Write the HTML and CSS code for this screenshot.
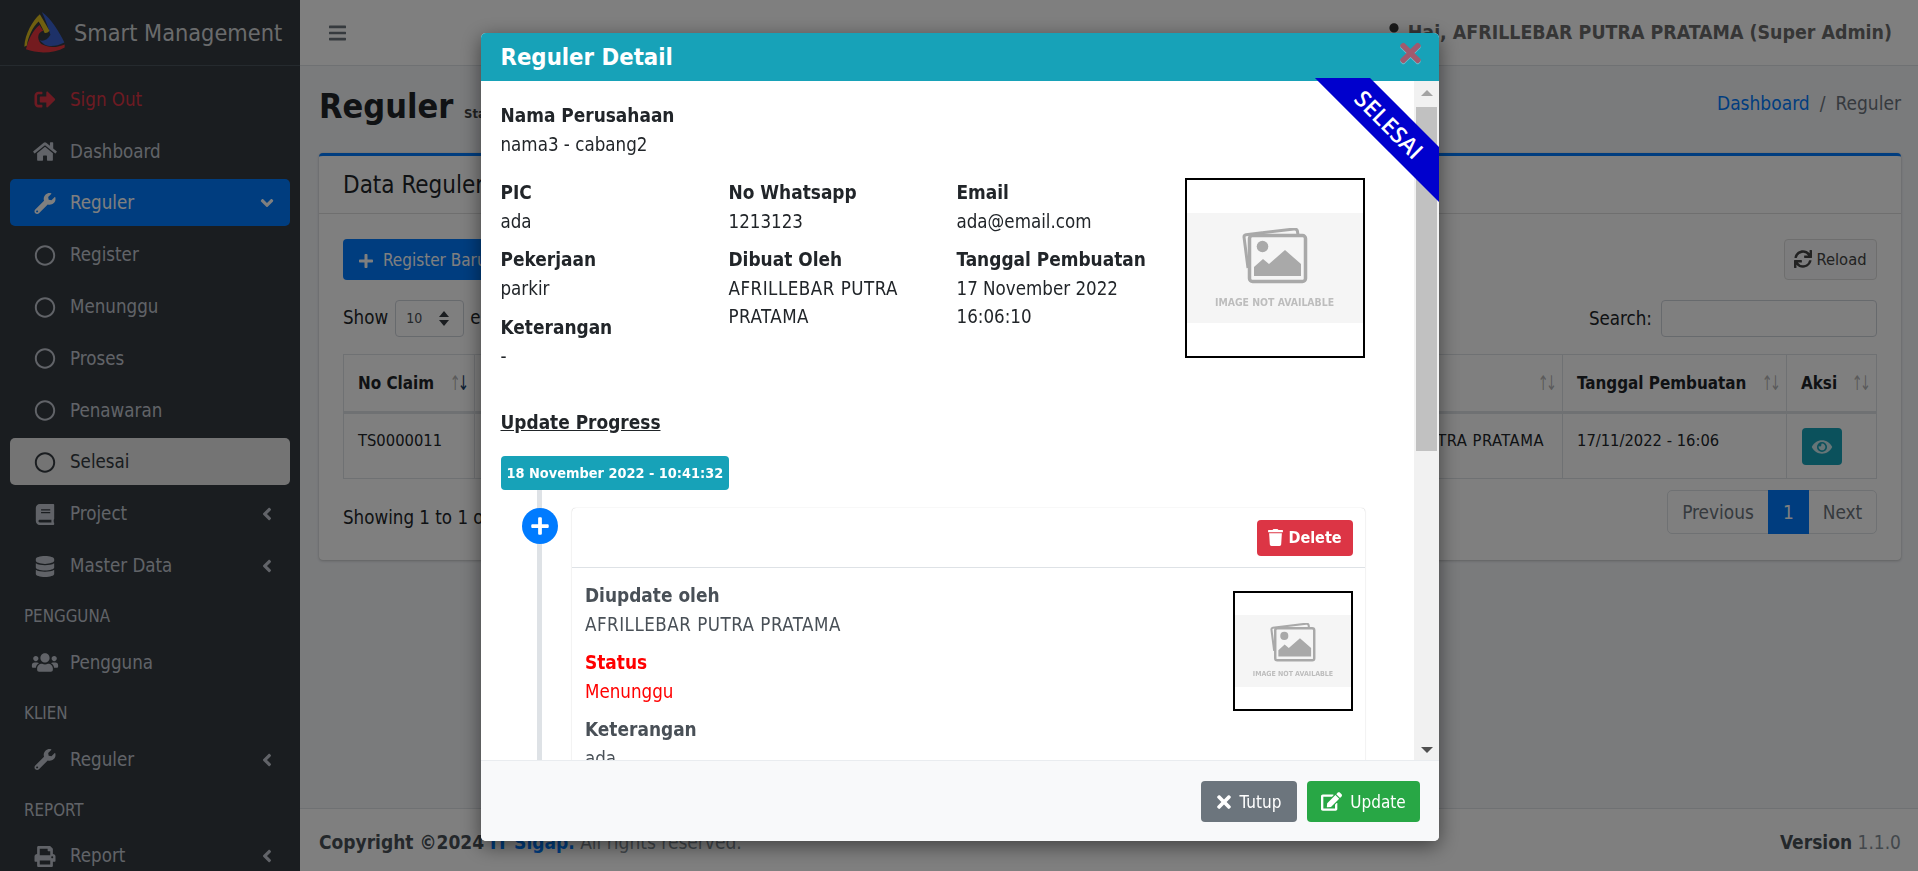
FILE: index.html
```html
<!DOCTYPE html>
<html lang="id">
<head>
    <meta charset="UTF-8">
    <meta name="viewport" content="width=device-width, initial-scale=1.0">
    <title>Reguler</title>
    <link rel="stylesheet" href="styles.css">
</head>
<body>

<svg class="sprite" xmlns="http://www.w3.org/2000/svg">
    <symbol id="i-plus" viewBox="0 0 448 512"><path d="M416 208H272V64c0-17.670-14.330-32-32-32h-32c-17.670 0-32 14.330-32 32v144H32c-17.670 0-32 14.330-32 32v32c0 17.670 14.330 32 32 32h144v144c0 17.670 14.330 32 32 32h32c17.670 0 32-14.330 32-32V304h144c17.670 0 32-14.330 32-32v-32c0-17.670-14.330-32-32-32z"/></symbol>
    <symbol id="i-times" viewBox="0 0 352 512"><path d="M242.720 256l100.070-100.070c12.280-12.280 12.280-32.190 0-44.480l-22.240-22.240c-12.280-12.280-32.190-12.280-44.480 0L176 189.280 75.930 89.210c-12.280-12.280-32.190-12.280-44.480 0L9.210 111.450c-12.280 12.280-12.280 32.190 0 44.480L109.280 256 9.210 356.070c-12.280 12.280-12.280 32.190 0 44.480l22.240 22.240c12.280 12.280 32.200 12.280 44.480 0L176 322.720l100.070 100.070c12.280 12.280 32.200 12.280 44.480 0l22.240-22.240c12.280-12.280 12.280-32.190 0-44.480L242.720 256z"/></symbol>
    <symbol id="i-trash" viewBox="0 0 448 512"><path d="M432 32H312l-9.400-18.700A24 24 0 0 0 281.100 0H166.800a23.720 23.720 0 0 0-21.400 13.300L136 32H16A16 16 0 0 0 0 48v32a16 16 0 0 0 16 16h416a16 16 0 0 0 16-16V48a16 16 0 0 0-16-16zM53.200 467a48 48 0 0 0 47.900 45h245.800a48 48 0 0 0 47.900-45L416 128H32z"/></symbol>
    <symbol id="i-home" viewBox="0 0 576 512"><path d="M280.370 148.260L96 300.110V464a16 16 0 0 0 16 16l112.060-.29a16 16 0 0 0 15.920-16V368a16 16 0 0 1 16-16h64a16 16 0 0 1 16 16v95.640a16 16 0 0 0 16 16.050L464 480a16 16 0 0 0 16-16V300L295.670 148.260a12.190 12.190 0 0 0-15.300 0zM571.600 251.470L488 182.560V44.050a12 12 0 0 0-12-12h-56a12 12 0 0 0-12 12v72.610L318.470 43a48 48 0 0 0-61 0L4.340 251.470a12 12 0 0 0-1.600 16.900l25.500 31A12 12 0 0 0 45.150 301l235.220-193.740a12.190 12.190 0 0 1 15.300 0L530.900 301a12 12 0 0 0 16.900-1.600l25.500-31a12 12 0 0 0-1.700-16.930z"/></symbol>
    <symbol id="i-wrench" viewBox="0 0 512 512"><path d="M507.730 109.100c-2.240-9.030-13.540-12.090-20.120-5.510l-74.360 74.360-67.880-11.310-11.310-67.880 74.360-74.360c6.620-6.620 3.430-17.900-5.660-20.160-47.380-11.740-99.550.91-136.580 37.930-39.640 39.640-50.550 97.100-34.050 147.200L18.740 402.760c-24.990 24.990-24.990 65.510 0 90.500 24.990 24.990 65.510 24.990 90.500 0l213.210-213.210c50.120 16.710 107.470 5.680 147.370-34.220 37.070-37.070 49.700-89.320 37.910-136.730zM64 472c-13.250 0-24-10.750-24-24 0-13.260 10.750-24 24-24s24 10.740 24 24c0 13.250-10.750 24-24 24z"/></symbol>
    <symbol id="i-circle" viewBox="0 0 512 512"><path d="M256 8C119 8 8 119 8 256s111 248 248 248 248-111 248-248S393 8 256 8zm0 448c-110.500 0-200-89.500-200-200S145.500 56 256 56s200 89.500 200 200-89.500 200-200 200z"/></symbol>
    <symbol id="i-signout" viewBox="0 0 512 512"><path d="M497 273L329 441c-15 15-41 4.500-41-17v-96H152c-13.300 0-24-10.700-24-24v-96c0-13.300 10.700-24 24-24h136V88c0-21.400 25.900-32 41-17l168 168c9.300 9.400 9.300 24.600 0 34zM192 436v-40c0-6.600-5.400-12-12-12H96c-17.700 0-32-14.300-32-32V160c0-17.700 14.300-32 32-32h84c6.600 0 12-5.400 12-12V76c0-6.600-5.400-12-12-12H96c-53 0-96 43-96 96v192c0 53 43 96 96 96h84c6.600 0 12-5.400 12-12z"/></symbol>
    <symbol id="i-book" viewBox="0 0 448 512"><path d="M448 360V24c0-13.300-10.700-24-24-24H96C43 0 0 43 0 96v320c0 53 43 96 96 96h328c13.300 0 24-10.700 24-24v-16c0-7.500-3.500-14.300-8.900-18.700-4.200-15.400-4.200-59.300 0-74.700 5.400-4.300 8.900-11.100 8.900-18.600zM128 134c0-3.300 2.700-6 6-6h212c3.300 0 6 2.700 6 6v20c0 3.300-2.700 6-6 6H134c-3.300 0-6-2.700-6-6v-20zm0 64c0-3.300 2.700-6 6-6h212c3.300 0 6 2.700 6 6v20c0 3.300-2.700 6-6 6H134c-3.300 0-6-2.700-6-6v-20zm253.400 250H96c-17.700 0-32-14.300-32-32 0-17.600 14.400-32 32-32h285.400c-1.900 17.100-1.900 46.900 0 64z"/></symbol>
    <symbol id="i-database" viewBox="0 0 448 512"><path d="M448 73.143v45.714C448 159.143 347.667 192 224 192S0 159.143 0 118.857V73.143C0 32.857 100.333 0 224 0s224 32.857 224 73.143zM448 176v102.857C448 319.143 347.667 352 224 352S0 319.143 0 278.857V176c48.125 33.143 136.208 48.572 224 48.572S399.874 209.143 448 176zm0 160v102.857C448 479.143 347.667 512 224 512S0 479.143 0 438.857V336c48.125 33.143 136.208 48.572 224 48.572S399.874 369.143 448 336z"/></symbol>
    <symbol id="i-users" viewBox="0 0 640 512"><path d="M96 224c35.300 0 64-28.700 64-64s-28.700-64-64-64-64 28.700-64 64 28.700 64 64 64zm448 0c35.300 0 64-28.700 64-64s-28.700-64-64-64-64 28.700-64 64 28.700 64 64 64zm32 32h-64c-17.600 0-33.500 7.100-45.100 18.600 40.300 22.100 68.900 62 75.100 109.400h66c17.700 0 32-14.300 32-32v-32c0-35.300-28.700-64-64-64zm-256 0c61.900 0 112-50.100 112-112S381.900 32 320 32 208 82.100 208 144s50.100 112 112 112zm76.800 32h-8.300c-20.800 10-43.900 16-68.500 16s-47.600-6-68.500-16h-8.300C179.600 288 128 339.600 128 403.200V432c0 26.500 21.500 48 48 48h288c26.500 0 48-21.500 48-48v-28.800c0-63.600-51.600-115.200-115.200-115.200zm-223.700-13.400C161.500 263.100 145.600 256 128 256H64c-35.300 0-64 28.700-64 64v32c0 17.700 14.300 32 32 32h65.900c6.300-47.400 34.900-87.300 75.200-109.400z"/></symbol>
    <symbol id="i-print" viewBox="0 0 512 512"><path d="M448 192V77.250c0-8.490-3.370-16.620-9.370-22.630L393.370 9.370c-6-6-14.140-9.370-22.630-9.370H96C78.330 0 64 14.330 64 32v160c-35.350 0-64 28.650-64 64v112c0 8.840 7.160 16 16 16h48v96c0 17.670 14.330 32 32 32h320c17.670 0 32-14.330 32-32v-96h48c8.840 0 16-7.160 16-16V256c0-35.350-28.650-64-64-64zm-64 256H128v-96h256v96zm0-224H128V64h192v48c0 8.840 7.160 16 16 16h48v96zm48 72c-13.250 0-24-10.750-24-24 0-13.270 10.750-24 24-24s24 10.730 24 24c0 13.250-10.750 24-24 24z"/></symbol>
    <symbol id="i-eye" viewBox="0 0 576 512"><path d="M572.520 241.400C518.290 135.590 410.930 64 288 64S57.680 135.640 3.480 241.410a32.350 32.350 0 0 0 0 29.190C57.710 376.410 165.070 448 288 448s230.320-71.640 284.520-177.410a32.350 32.350 0 0 0 0-29.190zM288 400a144 144 0 1 1 144-144 143.930 143.930 0 0 1-144 144zm0-240a95.310 95.310 0 0 0-25.310 3.790 47.850 47.850 0 0 1-66.900 66.900A95.780 95.780 0 1 0 288 160z"/></symbol>
    <symbol id="i-sync" viewBox="0 0 512 512"><path d="M440.650 12.570l4 82.770A247.160 247.160 0 0 0 255.830 8C134.730 8 33.910 94.920 12.290 209.820A12 12 0 0 0 24.090 224h49.050a12 12 0 0 0 11.670-9.260 175.910 175.910 0 0 1 317-56.940l-101.460-4.860a12 12 0 0 0-12.570 12v47.410a12 12 0 0 0 12 12H500a12 12 0 0 0 12-12V12a12 12 0 0 0-12-12h-47.370a12 12 0 0 0-11.980 12.570zM255.830 432a175.610 175.610 0 0 1-146-77.800l101.800 4.870a12 12 0 0 0 12.570-12v-47.400a12 12 0 0 0-12-12H12a12 12 0 0 0-12 12V500a12 12 0 0 0 12 12h47.350a12 12 0 0 0 12-12.600l-4.150-82.570A247.170 247.170 0 0 0 255.830 504c121.110 0 221.930-86.920 243.550-201.820a12 12 0 0 0-11.800-14.180h-49.050a12 12 0 0 0-11.670 9.260A175.860 175.860 0 0 1 255.830 432z"/></symbol>
    <symbol id="i-edit" viewBox="0 0 576 512"><path d="M402.600 83.200l90.200 90.200c3.800 3.800 3.800 10 0 13.800L274.400 405.600l-92.800 10.300c-12.400 1.400-22.900-9.100-21.500-21.500l10.300-92.800L388.800 83.200c3.800-3.800 10-3.800 13.800 0zm162-22.900l-48.800-48.800c-15.200-15.200-39.900-15.200-55.200 0l-35.400 35.400c-3.800 3.800-3.800 10 0 13.800l90.200 90.200c3.800 3.800 10 3.800 13.800 0l35.400-35.400c15.200-15.300 15.200-40 0-55.200zM384 346.200V448H64V128h229.800c3.200 0 6.200-1.300 8.500-3.500l40-40c7.600-7.600 2.200-20.500-8.500-20.500H48C21.500 64 0 85.500 0 112v352c0 26.500 21.500 48 48 48h352c26.500 0 48-21.500 48-48V306.200c0-10.700-12.900-16-20.500-8.500l-40 40c-2.200 2.300-3.500 5.300-3.500 8.500z"/></symbol>
    <symbol id="i-user" viewBox="0 0 448 512"><path d="M224 256c70.700 0 128-57.300 128-128S294.700 0 224 0 96 57.300 96 128s57.300 128 128 128zm89.600 32h-16.700c-22.200 10.200-46.900 16-72.900 16s-50.600-5.800-72.900-16h-16.700C60.200 288 0 348.200 0 422.400V464c0 26.500 21.500 48 48 48h352c26.500 0 48-21.500 48-48v-41.600c0-74.200-60.200-134.400-134.400-134.400z"/></symbol>
    <symbol id="i-bars" viewBox="0 0 448 512"><path d="M16 132h416c8.837 0 16-7.163 16-16V76c0-8.837-7.163-16-16-16H16C7.163 60 0 67.163 0 76v40c0 8.837 7.163 16 16 16zm0 160h416c8.837 0 16-7.163 16-16v-40c0-8.837-7.163-16-16-16H16c-8.837 0-16 7.163-16 16v40c0 8.837 7.163 16 16 16zm0 160h416c8.837 0 16-7.163 16-16v-40c0-8.837-7.163-16-16-16H16c-8.837 0-16 7.163-16 16v40c0 8.837 7.163 16 16 16z"/></symbol>
    <symbol id="i-angle" viewBox="0 0 256 512"><path d="M31.700 239l136-136c9.400-9.400 24.600-9.400 33.900 0l22.600 22.600c9.400 9.400 9.400 24.600 0 33.900L127.900 256l96.400 96.400c9.400 9.400 9.400 24.600 0 33.900L201.700 409c-9.400 9.400-24.600 9.400-33.900 0l-136-136c-9.500-9.400-9.500-24.600-.1-34z"/></symbol>
    <symbol id="i-noimg" viewBox="0 0 66 56">
        <path fill="none" stroke="currentColor" stroke-width="3" d="M6 40 2 9c0-1 .5-2 2-2.300L52 1c2-.2 3 .5 3.400 2L56 7"/>
        <rect x="7.500" y="7.500" width="56" height="46" rx="3" fill="#f5f5f5" stroke="currentColor" stroke-width="3.500"/>
        <circle cx="20.500" cy="18.500" r="5.800" fill="currentColor"/>
        <path fill="currentColor" d="M12 48V39l9-8 6 5 16-14 16 14v12z"/>
    </symbol>
</svg>

<div class="wrapper">
    <aside class="sidebar">
        <div class="brand">
            <svg class="brand-logo" viewBox="25 12 130 130">
                <path fill="#3a62d0" d="M82 15C110 35 135 75 150 107 127 119 105 121 90 113L74 100C85 105 100 100 108 84 100 58 92 35 82 15Z"/>
                <path fill="#e8363e" d="M34 128C42 95 55 70 75 54L86 72C70 76 65 96 80 112 105 125 130 122 151 113L151 122C120 140 70 142 34 128Z"/>
                <path fill="#e0c020" d="M29 120C31 80 55 40 76 22L105 72C100 78 95 80 90 78 85 66 78 52 72 44 55 60 40 90 37 116Z"/>
            </svg>
            <span class="brand-text">Smart Management</span>
        </div>
        <nav class="side-nav">
            <a class="nav-item nav-danger"><svg class="nav-ico"><use href="#i-signout"/></svg>Sign Out</a>
            <a class="nav-item"><svg class="nav-ico"><use href="#i-home"/></svg>Dashboard</a>
            <a class="nav-item nav-primary"><svg class="nav-ico"><use href="#i-wrench"/></svg>Reguler<svg class="nav-caret caret-down"><use href="#i-angle"/></svg></a>
            <a class="nav-item"><svg class="nav-ico"><use href="#i-circle"/></svg>Register</a>
            <a class="nav-item"><svg class="nav-ico"><use href="#i-circle"/></svg>Menunggu</a>
            <a class="nav-item"><svg class="nav-ico"><use href="#i-circle"/></svg>Proses</a>
            <a class="nav-item"><svg class="nav-ico"><use href="#i-circle"/></svg>Penawaran</a>
            <a class="nav-item nav-light"><svg class="nav-ico"><use href="#i-circle"/></svg>Selesai</a>
            <a class="nav-item"><svg class="nav-ico"><use href="#i-book"/></svg>Project<svg class="nav-caret"><use href="#i-angle"/></svg></a>
            <a class="nav-item"><svg class="nav-ico"><use href="#i-database"/></svg>Master Data<svg class="nav-caret"><use href="#i-angle"/></svg></a>
            <div class="nav-header">PENGGUNA</div>
            <a class="nav-item"><svg class="nav-ico"><use href="#i-users"/></svg>Pengguna</a>
            <div class="nav-header">KLIEN</div>
            <a class="nav-item"><svg class="nav-ico"><use href="#i-wrench"/></svg>Reguler<svg class="nav-caret"><use href="#i-angle"/></svg></a>
            <div class="nav-header">REPORT</div>
            <a class="nav-item"><svg class="nav-ico"><use href="#i-print"/></svg>Report<svg class="nav-caret"><use href="#i-angle"/></svg></a>
        </nav>
    </aside>

    <div class="main">
        <header class="topbar">
            <svg class="burger"><use href="#i-bars"/></svg>
            <div class="greeting"><svg class="greeting-ico"><use href="#i-user"/></svg>Hai, AFRILLEBAR PUTRA PRATAMA (Super Admin)</div>
        </header>

        <div class="content">
            <div class="page-head">
                <h1 class="page-title">Reguler <small>Status</small></h1>
                <div class="crumbs"><a>Dashboard</a><span class="crumb-sep">/</span><span>Reguler</span></div>
            </div>

            <section class="card">
                <div class="card-head">Data Reguler</div>
                <div class="card-body">
                    <div class="tools">
                        <button class="btn-add"><svg class="btn-ico"><use href="#i-plus"/></svg>Register Baru</button>
                        <button class="btn-reload"><svg class="btn-ico"><use href="#i-sync"/></svg>Reload</button>
                    </div>
                    <div class="filters">
                        <div class="length">Show <span class="select">10<i class="select-arrows"></i></span> entries</div>
                        <div class="search">Search: <span class="search-input"></span></div>
                    </div>
                    <table class="data-table">
                        <colgroup>
                            <col class="col-claim"><col class="col-auto"><col class="col-auto"><col class="col-by"><col class="col-date"><col class="col-act">
                        </colgroup>
                        <thead>
                            <tr>
                                <th>No Claim<span class="sort"><b>↑</b><b class="on">↓</b></span></th>
                                <th>Perusahaan<span class="sort"><b>↑</b><b>↓</b></span></th>
                                <th>PIC<span class="sort"><b>↑</b><b>↓</b></span></th>
                                <th>Dibuat Oleh<span class="sort"><b>↑</b><b>↓</b></span></th>
                                <th>Tanggal Pembuatan<span class="sort"><b>↑</b><b>↓</b></span></th>
                                <th>Aksi<span class="sort"><b>↑</b><b>↓</b></span></th>
                            </tr>
                        </thead>
                        <tbody>
                            <tr>
                                <td>TS0000011</td>
                                <td>nama3 - cabang2</td>
                                <td>ada</td>
                                <td class="caps">AFRILLEBAR PUTRA PRATAMA</td>
                                <td>17/11/2022 - 16:06</td>
                                <td><button class="btn-view"><svg><use href="#i-eye"/></svg></button></td>
                            </tr>
                        </tbody>
                    </table>
                    <div class="table-foot">
                        <div class="table-info">Showing 1 to 1 of 1 entries</div>
                        <div class="pager"><a>Previous</a><a class="pager-on">1</a><a>Next</a></div>
                    </div>
                </div>
            </section>
        </div>

        <footer class="page-foot">
            <div><b>Copyright ©2024 <a>IT Sigap.</a></b> All rights reserved.</div>
            <div><b>Version</b> 1.1.0</div>
        </footer>
    </div>
</div>

<div class="backdrop">
    <div class="modal">
        <div class="modal-head">
            <h2>Reguler Detail</h2>
            <svg class="modal-close"><use href="#i-times"/></svg>
        </div>
        <div class="modal-mid">
            <div class="modal-body">
                <dl class="field company">
                    <dt>Nama Perusahaan</dt>
                    <dd>nama3 - cabang2</dd>
                </dl>
                <div class="detail-row">
                    <div class="detail-col">
                        <dl class="field"><dt>PIC</dt><dd>ada</dd></dl>
                        <dl class="field"><dt>Pekerjaan</dt><dd>parkir</dd></dl>
                        <dl class="field"><dt>Keterangan</dt><dd>-</dd></dl>
                    </div>
                    <div class="detail-col">
                        <dl class="field"><dt>No Whatsapp</dt><dd>1213123</dd></dl>
                        <dl class="field"><dt>Dibuat Oleh</dt><dd class="caps">AFRILLEBAR PUTRA PRATAMA</dd></dl>
                    </div>
                    <div class="detail-col">
                        <dl class="field"><dt>Email</dt><dd>ada@email.com</dd></dl>
                        <dl class="field"><dt>Tanggal Pembuatan</dt><dd>17 November 2022 16:06:10</dd></dl>
                    </div>
                    <div class="noimg noimg-lg">
                        <div class="noimg-band">
                            <svg><use href="#i-noimg"/></svg>
                            <span>IMAGE NOT AVAILABLE</span>
                        </div>
                    </div>
                </div>

                <div class="progress-title">Update Progress</div>
                <div class="time-label">18 November 2022 - 10:41:32</div>
                <div class="timeline">
                    <span class="time-dot"><svg><use href="#i-plus"/></svg></span>
                    <div class="time-card">
                        <div class="time-card-head">
                            <button class="btn-delete"><svg class="btn-ico"><use href="#i-trash"/></svg>Delete</button>
                        </div>
                        <div class="time-card-body">
                            <div class="time-fields">
                                <dl class="field"><dt>Diupdate oleh</dt><dd class="caps">AFRILLEBAR PUTRA PRATAMA</dd></dl>
                                <dl class="field field-red"><dt>Status</dt><dd>Menunggu</dd></dl>
                                <dl class="field"><dt>Keterangan</dt><dd>ada</dd></dl>
                            </div>
                            <div class="noimg noimg-sm">
                                <div class="noimg-band">
                                    <svg><use href="#i-noimg"/></svg>
                                    <span>IMAGE NOT AVAILABLE</span>
                                </div>
                            </div>
                        </div>
                    </div>
                </div>
            </div>
            <div class="scrollbar">
                <i class="scroll-up"></i>
                <i class="scroll-thumb"></i>
                <i class="scroll-down"></i>
            </div>
        </div>
        <div class="modal-foot">
            <button class="btn-close"><svg class="btn-ico"><use href="#i-times"/></svg>Tutup</button>
            <button class="btn-update"><svg class="btn-ico"><use href="#i-edit"/></svg>Update</button>
        </div>
        <div class="ribbon"><span>SELESAI</span></div>
    </div>
</div>

</body>
</html>
```

FILE: styles.css
```css
* { box-sizing: border-box; }
html, body {
    height: 100%;
    margin: 0;
    overflow: hidden;
}
body {
    font-family: "DejaVu Sans", Tahoma, sans-serif;
    font-stretch: condensed;
    font-size: 18.6px;
    line-height: 28px;
    color: #212529;
    background: #f4f6f9;
}
.sprite { display: none; }
svg { fill: currentColor; }
button { font: inherit; border: none; }
dl, dt, dd, h1, h2 { margin: 0; }
.caps { letter-spacing: .5px; }

.wrapper { display: flex; height: 871px; }

/* sidebar */
.sidebar {
    width: 300px;
    flex: none;
    background: #343a40;
    color: #c2c7d0;
    overflow: hidden;
}
.brand {
    display: flex;
    align-items: center;
    height: 66px;
    padding-left: 23px;
    border-bottom: 1px solid #4b545c;
}
.brand-logo { width: 43px; height: 43px; margin-right: 8px; flex: none; }
.brand-text { font-size: 23.3px; color: #d5d7d9; }
.side-nav { padding-top: 9px; }
.nav-item {
    display: flex;
    align-items: center;
    height: 47.8px;
    margin: 0 10px 4px;
    padding: 2px 0 0 20px;
    border-radius: 5px;
}
.nav-ico { width: 30px; height: 21px; margin-right: 10px; flex: none; }
.nav-caret { width: 16px; height: 20px; margin-left: auto; margin-right: 15px; }
.caret-down { transform: rotate(-90deg); }
.nav-danger { color: #dc3545; }
.nav-primary { background: #007bff; color: #fff; }
.nav-light { background: #e8e8e8; color: #343a40; }
.nav-header {
    display: flex;
    align-items: center;
    height: 45px;
    padding: 2px 0 0 24px;
    font-size: 16.8px;
}

/* main column */
.main { flex: 1; display: flex; flex-direction: column; min-width: 0; }
.topbar {
    display: flex;
    align-items: center;
    justify-content: space-between;
    height: 66px;
    padding: 0 26px 0 29px;
    background: #fff;
    border-bottom: 1px solid #dee2e6;
    color: #6c757d;
}
.burger { width: 17px; height: 20px; }
.greeting { font-weight: bold; font-size: 19.4px; color: #6c6c6c; display: flex; align-items: center; }
.greeting-ico { width: 16px; height: 19px; margin-right: 6px; color: #333; }
.content { flex: 1; padding: 0 17px 0 19px; }
.page-head {
    display: flex;
    justify-content: space-between;
    align-items: center;
    height: 87px;
}
.page-title { font-size: 34px; line-height: 40px; }
.page-title small { font-size: 13px; color: #444; }
.crumbs { color: #6c757d; font-size: 19px; padding-bottom: 14px; }
.crumbs a { color: #007bff; }
.crumb-sep { margin: 0 10px; }

.card {
    background: #fff;
    border-top: 3px solid #007bff;
    border-radius: 4px;
    box-shadow: 0 0 1px rgba(0,0,0,.13), 0 1px 3px rgba(0,0,0,.2);
}
.card-head {
    height: 58px;
    padding: 0 24px;
    display: flex;
    align-items: center;
    font-size: 24px;
    border-bottom: 1px solid #dfdfdf;
}
.card-body { padding: 25px 24px 0; height: 346px; }
.tools { display: flex; justify-content: space-between; }
.btn-ico { height: 16px; width: 18px; margin-right: 8px; vertical-align: -3px; }
.btn-add {
    height: 41px;
    width: 180px;
    border-radius: 4px;
    background: #007bff;
    color: #fff;
    font-size: 17px;
    text-align: left;
    padding-left: 14px;
    white-space: nowrap;
}
.btn-reload {
    height: 41px;
    width: 93px;
    border-radius: 4px;
    background: #f8f9fa;
    border: 1px solid #ddd;
    color: #444;
    font-size: 16.4px;
    padding: 0;
}
.btn-reload .btn-ico { margin-right: 4px; height: 18px; width: 18px; }
.filters {
    display: flex;
    justify-content: space-between;
    align-items: center;
    margin-top: 19px;
    height: 37px;
}
.length, .search { display: flex; align-items: center; padding-top: 1px; }
.search { padding-top: 2px; }
.select {
    display: inline-flex;
    align-items: center;
    justify-content: space-between;
    width: 69px;
    height: 37px;
    margin: 0 6px 0 7px;
    padding: 0 14px 0 10px;
    border: 1px solid #ced4da;
    border-radius: 4px;
    background: #fff;
    font-size: 14px;
    color: #495057;
}
.select-arrows {
    width: 0;
    height: 15px;
    border-left: 5px solid transparent;
    border-right: 5px solid transparent;
    background: none;
    position: relative;
}
.select-arrows::before, .select-arrows::after {
    content: "";
    position: absolute;
    left: -5px;
    border-left: 5px solid transparent;
    border-right: 5px solid transparent;
}
.select-arrows::before { top: 0; border-bottom: 6px solid #343a40; }
.select-arrows::after { bottom: 0; border-top: 6px solid #343a40; }
.search-input {
    display: block;
    width: 216px;
    height: 37px;
    margin-left: 9px;
    border: 1px solid #ced4da;
    border-radius: 4px;
    background: #fff;
}

.data-table {
    width: 1534px;
    margin-top: 18px;
    table-layout: fixed;
    border-collapse: collapse;
    font-size: 16.4px;
}
.col-claim { width: 131px; }
.col-by { width: 260px; }
.col-date { width: 224px; }
.col-act { width: 90px; }
.data-table th, .data-table td {
    border: 1px solid #dee2e6;
    padding: 0 14px;
    text-align: left;
    white-space: nowrap;
    overflow: hidden;
}
.data-table th {
    position: relative;
    height: 58px;
    border-bottom-width: 3px;
    font-size: 16.9px;
}
.data-table td { height: 66px; vertical-align: top; padding-top: 13px; }
.sort {
    position: absolute;
    right: 8px;
    top: 14px;
    font-size: 15px;
    letter-spacing: -3px;
    color: rgba(0,0,0,.3);
    transform: scaleY(1.35);
}
.sort b { font-weight: normal; }
.sort .on { color: #1a3d66; }
.btn-view {
    display: block;
    width: 40px;
    height: 37px;
    margin: 1px 0 0 1px;
    border-radius: 4px;
    background: #17a2b8;
    color: #cdeaee;
}
.btn-view svg { width: 22px; height: 18px; vertical-align: middle; }
.table-foot {
    display: flex;
    justify-content: space-between;
    align-items: flex-start;
    margin-top: 11px;
}
.table-info { padding-top: 14px; }
.pager {
    display: flex;
    height: 44px;
    border: 1px solid #dee2e6;
    border-radius: 5px;
    color: #6c757d;
    font-size: 18.9px;
}
.pager a {
    display: flex;
    align-items: center;
    justify-content: center;
    width: 67px;
}
.pager a:first-child { width: 100px; }
.pager .pager-on { background: #007bff; color: #fff; width: 41px; margin: -1px 0; }
.page-foot {
    display: flex;
    justify-content: space-between;
    align-items: center;
    height: 63px;
    padding: 4px 17px 0 19px;
    background: #fff;
    border-top: 1px solid #dee2e6;
    color: #869099;
    font-size: 19px;
}
.page-foot b { color: #495057; }
.page-foot a { color: #007bff; }

/* modal */
.backdrop {
    position: fixed;
    inset: 0;
    padding: 33px 0 0 481px;
    background: rgba(0,0,0,.5);
}
.modal {
    position: relative;
    display: flex;
    flex-direction: column;
    width: 958px;
    height: 808px;
    background: #fff;
    border-radius: 5px;
    overflow: hidden;
    box-shadow: 0 5px 20px rgba(0,0,0,.5);
}
.modal-head {
    display: flex;
    align-items: center;
    justify-content: space-between;
    height: 48px;
    padding: 0 18px 0 19.5px;
    background: #17a2b8;
    flex: none;
}
.modal-head h2 { font-size: 23.7px; color: #fff; line-height: 30px; }
.modal-close {
    width: 21px;
    height: 30px;
    margin-bottom: 8px;
    color: #a05a6e;
    filter: drop-shadow(0 1px 0 rgba(255,255,255,.35));
}
.modal-mid { display: flex; flex: 1; min-height: 0; }
.modal-body {
    flex: 1;
    min-width: 0;
    padding: 20px 49px 0 19.5px;
    overflow: hidden;
}
.field { margin-bottom: 9.3px; }
.field dt { font-weight: bold; font-size: 18.9px; }
.field dd { padding-top: 2px; }
.company { margin-bottom: 19px; }
.detail-row { display: flex; }
.detail-col { width: 228px; padding-right: 20px; }
.noimg {
    display: flex;
    align-items: center;
    border: 2px solid #000;
    background: #fff;
    flex: none;
}
.noimg-band {
    width: 100%;
    display: flex;
    flex-direction: column;
    align-items: center;
    justify-content: center;
    background: #f5f5f5;
    color: #a9a9a9;
}
.noimg-band span { display: block; color: #bdbdbd; font-weight: bold; line-height: 1; white-space: nowrap; }
.noimg-lg { width: 180px; height: 180px; }
.noimg-lg .noimg-band { height: 110px; }
.noimg-lg svg { width: 66px; height: 56px; margin-bottom: 13px; }
.noimg-lg span { font-size: 10.4px; }
.noimg-sm { width: 120px; height: 120px; }
.noimg-sm .noimg-band { height: 72px; }
.noimg-sm svg { width: 46px; height: 39px; margin-bottom: 9px; }
.noimg-sm span { font-size: 7px; }
.progress-title {
    margin-top: 28px;
    font-weight: bold;
    text-decoration: underline;
    font-size: 18.9px;
}
.time-label {
    display: inline-block;
    margin-top: 20px;
    height: 34px;
    padding: 0 6px;
    line-height: 34px;
    border-radius: 4px;
    background: #17a2b8;
    color: #fff;
    font-weight: bold;
    font-size: 14.4px;
    vertical-align: top;
}
.timeline {
    position: relative;
    padding: 18px 0 0 71.5px;
}
.timeline::before {
    content: "";
    position: absolute;
    left: 36.5px;
    top: 0;
    bottom: 0;
    width: 5px;
    background: #dee2e6;
}
.time-dot {
    position: absolute;
    left: 21.5px;
    top: 18px;
    display: flex;
    align-items: center;
    justify-content: center;
    width: 36px;
    height: 36px;
    border-radius: 50%;
    background: #007bff;
    color: #fff;
}
.time-dot svg { width: 18px; height: 20px; }
.time-card {
    width: 793px;
    height: 260px;
    border-radius: 4px;
    box-shadow: 0 0 1px rgba(0,0,0,.3), 0 1px 2px rgba(0,0,0,.1);
}
.time-card-head {
    display: flex;
    justify-content: flex-end;
    height: 60px;
    padding: 12px 12px 0;
    border-bottom: 1px solid #dee2e6;
}
.btn-delete {
    height: 36px;
    width: 96px;
    border-radius: 4px;
    background: #dc3545;
    color: #fff;
    font-weight: bold;
    font-size: 16px;
    padding: 0;
}
.btn-delete .btn-ico { width: 15px; height: 17px; margin-right: 5px; }
.time-card-body {
    display: flex;
    justify-content: space-between;
    padding: 13px 12px 0 13px;
    color: #495057;
}
.field-red { color: #f00; }
.noimg-sm { margin-top: 10px; }

.scrollbar {
    position: relative;
    display: flex;
    flex-direction: column;
    align-items: center;
    justify-content: space-between;
    width: 25px;
    flex: none;
    padding: 9px 0 7px;
    background: #f1f1f1;
}
.scroll-up, .scroll-down {
    width: 0;
    height: 0;
    border-left: 6px solid transparent;
    border-right: 6px solid transparent;
}
.scroll-up { border-bottom: 6px solid #a3a3a3; }
.scroll-down { border-top: 6px solid #505050; }
.scroll-thumb {
    position: absolute;
    left: 2px;
    top: 26px;
    width: 21px;
    height: 344px;
    background: #c1c1c1;
}
.modal-foot {
    display: flex;
    justify-content: flex-end;
    gap: 10px;
    height: 81px;
    flex: none;
    padding: 20px 19px 0 0;
    background: #f8f9fa;
    border-top: 1px solid #e9ecef;
}
.btn-close, .btn-update {
    height: 41px;
    border-radius: 4px;
    color: #fff;
    font-size: 17px;
    padding: 0;
}
.btn-close .btn-ico { width: 14px; height: 20px; vertical-align: -4px; margin-right: 9px; }
.btn-update .btn-ico { width: 21px; height: 19px; vertical-align: -3px; margin-right: 8px; }
.btn-close { width: 96px; background: #6c757d; }
.btn-update { width: 113px; background: #28a745; }

.ribbon {
    position: absolute;
    right: 0;
    top: 45px;
    width: 130px;
    height: 131px;
    overflow: hidden;
    pointer-events: none;
}
.ribbon span {
    position: absolute;
    left: -20px;
    top: 26.5px;
    width: 200px;
    height: 39px;
    line-height: 39px;
    text-align: center;
    font-family: "Open Sans", sans-serif;
    font-stretch: normal;
    font-weight: 600;
    font-size: 23px;
    color: #fff;
    background: #0000cd;
    transform: rotate(45deg);
}
```
